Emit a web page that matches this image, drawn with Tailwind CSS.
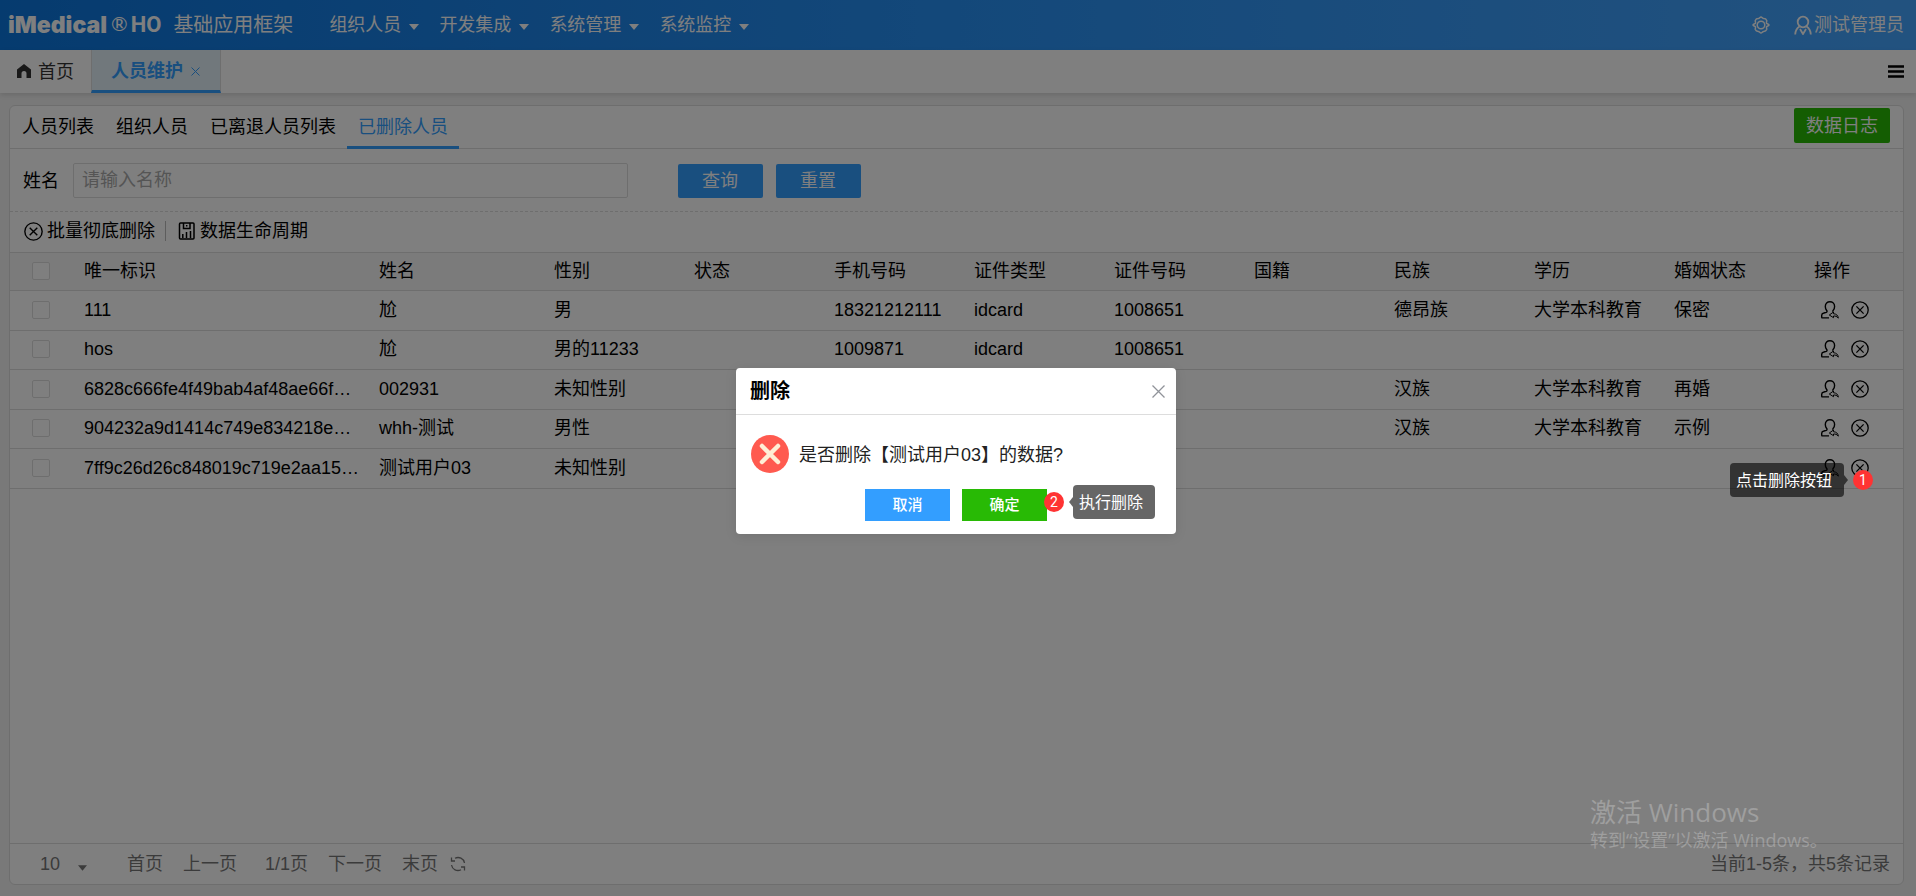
<!DOCTYPE html>
<html lang="zh-CN">
<head>
<meta charset="utf-8">
<title>人员维护</title>
<script src="https://cdn.jsdelivr.net/npm/@tailwindcss/browser@4"></script>
</head>
<body class="relative flex h-screen flex-col overflow-hidden bg-[#f2f2f2] font-['Liberation_Sans','Noto_Sans_CJK_SC',sans-serif] text-lg leading-6 text-black">
<svg class="hidden">
  <symbol id="circle-x" viewBox="0 0 18 18"><g fill="none" stroke="currentColor" stroke-width="1.3"><circle cx="9" cy="9" r="8.2"/><path d="M5.4 5.4l7.2 7.2M12.6 5.4l-7.2 7.2"/></g></symbol>
  <symbol id="restore-user" viewBox="0 0 18 18"><g fill="none" stroke="currentColor" stroke-width="1.4"><path d="M8 16.900H1.400c-.5 0-.7-.3-.7-.8v-1.900c0-1.200 1-1.900 2.200-2.200l2.400-.7c.8-.3 1-1 .4-1.800C4.800 8.300 4.300 6.900 4.300 5.400 4.300 2.600 6.300.8 8.900.8s4.700 1.800 4.700 4.600c0 1.500-.5 2.900-1.500 4.100-.3.400-.4.900-.2 1.300"/><path d="M12.500 11l-4.200 3 4.200 2.700v-1.700c1.800-.2 3.500.4 4.800 2.200-.2-2.800-2-4.300-4.800-4.500z" stroke-width="1"/></g></symbol>
</svg>

<header class="flex h-[50px] shrink-0 items-center bg-linear-to-r from-[#0b76de] via-[#2791f5] to-[#45a5ff] pl-2 pr-3 text-white">
  <a href="#" class="flex items-center">
    <span class="font-['Inter'] text-[23px] font-black">iMedical</span>
    <span class="ml-1 self-start font-['Lato'] text-xl leading-5">®</span>
    <span class="ml-[3px] font-['Roboto'] text-[22px] font-bold">HO</span>
  </a>
  <span class="ml-3 text-xl">基础应用框架</span>
  <nav class="ml-9 flex">
    <button class="flex w-[110px] items-center gap-2">组织人员<svg class="mt-1 h-[6px] w-[10px]" viewBox="0 0 10 6"><path fill="currentColor" d="M0 0h10L5 6z"/></svg></button>
    <button class="flex w-[110px] items-center gap-2">开发集成<svg class="mt-1 h-[6px] w-[10px]" viewBox="0 0 10 6"><path fill="currentColor" d="M0 0h10L5 6z"/></svg></button>
    <button class="flex w-[110px] items-center gap-2">系统管理<svg class="mt-1 h-[6px] w-[10px]" viewBox="0 0 10 6"><path fill="currentColor" d="M0 0h10L5 6z"/></svg></button>
    <button class="flex w-[110px] items-center gap-2">系统监控<svg class="mt-1 h-[6px] w-[10px]" viewBox="0 0 10 6"><path fill="currentColor" d="M0 0h10L5 6z"/></svg></button>
  </nav>
  <button aria-label="设置" class="ml-auto"><svg class="size-[18px]" viewBox="0 0 18 18" fill="none" stroke="currentColor" stroke-width="1.500"><path d="M6.300 2.600C7.300 2.800 8 1 9 1s1.700 1.800 2.700 1.600c1.100 0 2.600.9 3 1.900.3 1-.6 1.800-.1 2.700.6.800 2.400.9 2.400 1.800s-1.800 1-2.400 1.800c-.5.9.4 1.700.1 2.700-.4 1-1.900 1.900-3 1.900-1-.2-1.700 1.600-2.700 1.600s-1.700-1.800-2.700-1.600c-1.100 0-2.600-.9-3-1.900-.3-1 .6-1.800.1-2.700C2.800 10 1 9.900 1 9s1.800-1 2.400-1.800c.5-.9-.4-1.700-.1-2.700.4-1 1.900-1.900 3-1.900z"/><circle cx="9" cy="9" r="3.800"/></svg></button>
  <button class="ml-6 flex items-center gap-0.5"><svg class="h-5 w-[18px]" viewBox="0 0 18 20" fill="none" stroke="currentColor" stroke-width="1.800"><circle cx="9" cy="7" r="5.300"/><path d="M5.500 11.500C3 13 1.400 15.500 1.200 19.500M12.500 11.500c2.500 1.500 4.100 4 4.300 8M6 14l3 5 3-5"/></svg>测试管理员</button>
</header>

<div class="z-0 flex h-[43px] shrink-0 items-stretch bg-white shadow-[0_2px_5px_rgba(0,0,0,0.120)]">
  <a href="#" class="flex w-[91px] items-center gap-1.5 pl-4 text-[#333]"><svg class="h-[15px] w-4" viewBox="0 0 16 15"><path fill="currentColor" d="M8 0l7 5.500V14h-4.500V9.500a2.500 2.500 0 0 0-5 0V14H1V5.500z"/></svg>首页</a>
  <div class="flex items-center justify-center gap-2 border-x border-b-3 border-x-[#ddd] border-b-[#339eff] bg-[#e3f1f8] pt-0.5 pl-[19px] pr-5 font-bold text-[#339eff]"><a href="#">人员维护</a><button aria-label="关闭"><svg class="size-[9px]" viewBox="0 0 9 9"><path d="M.5.5l8 8M8.500.5l-8 8" stroke="currentColor"/></svg></button></div>
  <button aria-label="菜单" class="ml-auto pr-3"><svg class="h-[13px] w-4" viewBox="0 0 16 13"><path d="M0 1.500h16M0 6.500h16M0 11.500h16" stroke="currentColor" stroke-width="2.400"/></svg></button>
</div>

<main class="mr-3 mt-3 mb-[11px] ml-[9px] flex min-h-0 flex-1 flex-col rounded-md border border-[#ddd] bg-white">
  <div class="flex h-[43px] shrink-0 items-stretch border-b border-[#ddd] pr-[13px]">
    <a href="#" class="flex items-center pl-3 pr-[11px]">人员列表</a>
    <a href="#" class="flex items-center px-[11px]">组织人员</a>
    <a href="#" class="flex items-center px-[11px]">已离退人员列表</a>
    <a href="#" class="-mb-px flex items-center border-b-3 border-[#339eff] px-[11px] pt-0.5 text-[#339eff]">已删除人员</a>
    <button class="ml-auto mt-0.5 h-[35px] self-start rounded-xs bg-[#28ba05] px-3 text-white">数据日志</button>
  </div>
  <form class="flex h-[63px] shrink-0 items-center border-b border-dashed border-[#ddd] pl-[13px] pt-px">
    <label for="name" class="mr-3.5">姓名</label>
    <input id="name" type="text" placeholder="请输入名称" class="h-[35px] w-[29.500%] rounded-xs border border-[#ddd] px-2 placeholder:text-[#aaa]">
    <button type="button" class="ml-[50px] h-[34px] w-[85px] rounded-xs bg-[#339eff] text-white">查询</button>
    <button type="button" class="ml-[13px] h-[34px] w-[85px] rounded-xs bg-[#339eff] text-white">重置</button>
  </form>
  <div class="flex h-10 shrink-0 items-center pb-0.5 pl-3.5">
    <button class="flex items-center gap-1"><svg class="size-[19px]"><use href="#circle-x"/></svg>批量彻底删除</button>
    <span class="ml-2.5 mr-3 h-5 w-px bg-[#bbb]"></span>
    <button class="flex items-center gap-1"><svg class="size-[18px]" viewBox="0 0 18 18" fill="none" stroke="currentColor" stroke-width="1.500"><rect x="1.500" y="1" width="14.500" height="16" rx="1"/><path d="M5.500 1v5.500h6.500V1M8.700 3v1.500M4.800 16v-4M8.500 16v-6M12.500 16V9"/></svg>数据生命周期</button>
  </div>
  <table class="w-full table-fixed border-collapse text-left [&_td]:whitespace-nowrap [&_td]:pt-0 [&_td]:pb-0.5 [&_td]:px-2.5 [&_th]:pt-0 [&_th]:pb-0.5 [&_th]:px-2.5 [&_th]:font-normal [&_tr]:border-y [&_tr]:border-[#ddd] [&_input]:block [&_input]:size-[18px] [&_input]:appearance-none [&_input]:rounded-xs [&_input]:border [&_input]:border-[#ddd] [&_input]:ml-3 [&_input]:bg-white">
    <colgroup><col class="w-16"><col class="w-[295px]"><col class="w-[175px]"><col class="w-[140px]"><col class="w-[140px]"><col class="w-[140px]"><col class="w-[140px]"><col class="w-[140px]"><col class="w-[140px]"><col class="w-[140px]"><col class="w-[140px]"><col class="w-[140px]"><col></colgroup>
    <thead><tr class="h-[38px] bg-[#f7f7f7]"><th><input type="checkbox" aria-label="全选"></th><th>唯一标识</th><th>姓名</th><th>性别</th><th>状态</th><th>手机号码</th><th>证件类型</th><th>证件号码</th><th>国籍</th><th>民族</th><th>学历</th><th>婚姻状态</th><th>操作</th></tr></thead>
    <tbody id="rows"></tbody>
  </table>
  <footer class="mt-auto flex h-[41px] shrink-0 items-center border-t border-[#ddd] pl-[30px] pr-[13px] text-[#777]">
    <label class="flex items-center" aria-label="每页条数"><select class="w-[38px] appearance-none"><option>10</option></select><svg class="mt-2 h-[6px] w-[9px]" viewBox="0 0 10 6"><path fill="currentColor" d="M0 0h10L5 6z"/></svg></label>
    <button class="ml-10">首页</button>
    <button class="ml-5">上一页</button>
    <span class="ml-7">1/1页</span>
    <button class="ml-5">下一页</button>
    <button class="ml-5">末页</button>
    <button aria-label="刷新" class="ml-3"><svg class="size-4" viewBox="0 0 16 16" fill="none" stroke="currentColor" stroke-width="1.300"><path d="M1.500 9A6.500 6.500 0 0 0 11 13.700M14.500 7A6.500 6.500 0 0 0 5 2.300M1.500 1.500v3.500h3.500M14.500 14.500V11H11"/></svg></button>
    <span class="ml-auto">当前1-5条，共5条记录</span>
  </footer>
</main>

<div class="absolute inset-0 flex items-center justify-center bg-black/50 pr-1 pt-1.5">
  <section role="dialog" aria-labelledby="title" class="w-[440px] rounded-sm bg-white shadow-[0_2px_12px_rgba(0,0,0,0.100)]">
    <div class="flex h-[47px] items-center justify-between border-b border-[#ddd] pl-3.5 pr-[11px]">
      <h2 id="title" class="text-xl font-bold">删除</h2>
      <button aria-label="关闭" class="text-[#909399]"><svg class="size-[13px]" viewBox="0 0 13 13"><path d="M.5.5l12 12M12.500.5l-12 12" stroke="currentColor" stroke-width="1.300"/></svg></button>
    </div>
    <div class="flex items-center gap-2.5 pl-[15px] pt-5">
      <svg class="size-[38px]" viewBox="0 0 38 38"><circle cx="19" cy="19" r="19" fill="#ff5a4f"/><path d="M11 11l16 16M27 11L11 27" stroke="#ffefd5" stroke-width="4.500" stroke-linecap="round"/></svg>
      <p class="pt-0.5 text-[#222]">是否删除【测试用户03】的数据?</p>
    </div>
    <div class="flex justify-end gap-3 pb-[13px] pr-[129px] pt-4 text-[15px] font-medium text-white">
      <button class="h-8 w-[85px] bg-[#339eff]">取消</button>
      <div class="relative">
        <button class="h-8 w-[85px] bg-[#28ba05]">确定</button>
        <span class="absolute -right-[17px] top-[3px] size-5 rounded-full bg-[#ff3333] text-center font-['Roboto'] text-sm leading-5 font-normal">2</span>
        <div role="tooltip" class="absolute left-[107px] -top-1 flex items-center text-base font-normal whitespace-nowrap"><svg class="h-[10px] w-1" viewBox="0 0 4 10"><path d="M4 0v10L0 5z" fill="#000" fill-opacity=".6"/></svg><span class="rounded-sm bg-black/60 pt-1.5 pb-1 pl-1.5 pr-3">执行删除</span></div>
      </div>
    </div>
  </section>
  <div role="tooltip" class="absolute right-[43px] top-[463px] flex items-center text-base text-white"><span class="rounded-sm bg-black/60 pt-1.5 pb-1 pl-1.5 pr-3">点击删除按钮</span><svg class="h-[10px] w-1" viewBox="0 0 4 10"><path d="M0 0v10L4 5z" fill="#000" fill-opacity=".6"/></svg><span class="ml-[5px] size-5 rounded-full bg-[#ff3333] text-center font-['Roboto'] text-sm leading-5">1</span></div>
  <div class="absolute right-[90px] bottom-11 w-[236px] font-['Open_Sans','Noto_Sans_CJK_SC',sans-serif] whitespace-nowrap text-white/25"><p class="text-[26px] leading-8">激活 Windows</p><p class="text-lg leading-6">转到“设置”以激活 Windows。</p></div>
</div>

<template id="row"><tr class="odd:h-10 even:h-[39px]"><td><input type="checkbox"></td><td></td><td></td><td></td><td></td><td></td><td></td><td></td><td></td><td></td><td></td><td></td><td><div class="flex gap-3 pl-[7px]"><button aria-label="恢复"><svg class="block size-[18px]"><use href="#restore-user"/></svg></button><button aria-label="彻底删除"><svg class="block size-[18px]"><use href="#circle-x"/></svg></button></div></td></tr></template>
<script>
const people = [
  ['111','尬','男','','18321212111','idcard','1008651','','德昂族','大学本科教育','保密'],
  ['hos','尬','男的11233','','1009871','idcard','1008651','','','',''],
  ['6828c666fe4f49bab4af48ae66f…','002931','未知性别','','','','','','汉族','大学本科教育','再婚'],
  ['904232a9d1414c749e834218e…','whh-测试','男性','','','','','','汉族','大学本科教育','示例'],
  ['7ff9c26d26c848019c719e2aa15…','测试用户03','未知性别','','','','','','','','']
];
for (const person of people) {
  const row = document.getElementById('row').content.cloneNode(true);
  const cells = row.querySelectorAll('td');
  row.querySelector('input').setAttribute('aria-label', '选择 ' + person[0]);
  person.forEach((value, i) => {
    cells[i + 1].textContent = value;
  });
  document.getElementById('rows').append(row);
}
</script>
</body>
</html>
